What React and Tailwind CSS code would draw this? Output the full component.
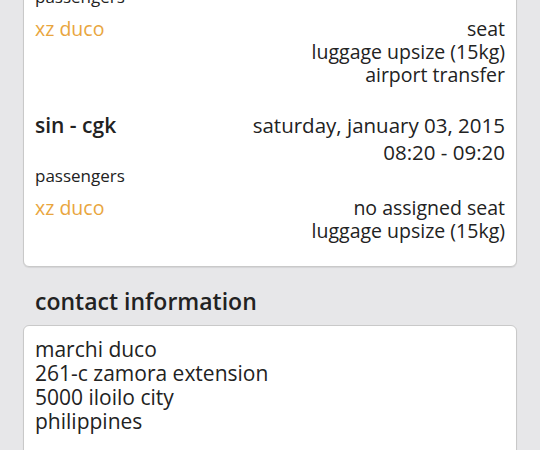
export default function App() {
  const orange = 'text-[#e9a63e]';

  return (
    <div className="h-[450px] w-[540px] overflow-hidden bg-[#e7e7e9] px-[23px] font-['Open_Sans','Noto_Sans',sans-serif] text-[#222]">
      {/* Flight card, scrolled partially above the top */}
      <div className="-mt-[25px] rounded-md border border-[#c9c9c9] bg-white px-[11px] pt-[10px] pb-[24px] shadow-[0_1px_1px_rgba(0,0,0,0.08)]">
        <div className="text-[17px] leading-[22px]">passengers</div>
        <div className="mt-[9px] flex justify-between text-[19.5px] leading-[23px]">
          <span className={orange}>xz duco</span>
          <div className="text-right">
            <div>seat</div>
            <div>luggage upsize (15kg)</div>
            <div>airport transfer</div>
          </div>
        </div>

        <div className="mt-[26px] flex justify-between text-[20.5px] leading-[27px]">
          <span className="text-[21px] font-semibold">sin - cgk</span>
          <div className="text-right">
            <div>saturday, january 03, 2015</div>
            <div>08:20 - 09:20</div>
          </div>
        </div>

        <div className="-mt-[1px] text-[17px] leading-[22px]">passengers</div>
        <div className="mt-[9px] flex justify-between text-[19.5px] leading-[23px]">
          <span className={orange}>xz duco</span>
          <div className="text-right">
            <div>no assigned seat</div>
            <div>luggage upsize (15kg)</div>
          </div>
        </div>
      </div>

      {/* Contact information */}
      <h2 className="mt-[20px] px-[12px] text-[23px] font-semibold leading-[28px]">contact information</h2>
      <div className="mt-[10px] h-[200px] rounded-md border border-[#c9c9c9] bg-white px-[11px] pt-[11px] text-[21px] leading-[24px] shadow-[0_1px_1px_rgba(0,0,0,0.08)]">
        <div>marchi duco</div>
        <div>261-c zamora extension</div>
        <div>5000 iloilo city</div>
        <div>philippines</div>
      </div>
    </div>
  );
}
